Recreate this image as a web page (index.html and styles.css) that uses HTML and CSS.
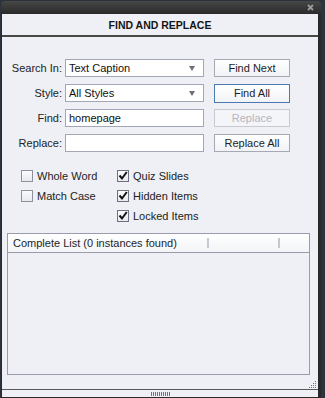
FILE: index.html
```html
<!DOCTYPE html>
<html lang="en">
<head>
    <meta charset="UTF-8">
    <meta name="viewport" content="width=device-width, initial-scale=1.0">
    <title>Find and Replace</title>
    <link rel="stylesheet" href="styles.css">
</head>
<body>
    <div class="window">
        <div class="titlebar">
            <svg class="close" width="7" height="7" viewBox="0 0 7 7">
                <path d="M1 1L6 6M6 1L1 6" stroke="#9a9a9a" stroke-width="1.8"/>
            </svg>
        </div>
        <div class="panel">
            <div class="header">FIND AND REPLACE</div>
            <div class="form">
                <label>Search In:</label>
                <div class="select">Text Caption<span class="arrow"></span></div>
                <button class="btn">Find Next</button>

                <label>Style:</label>
                <div class="select">All Styles<span class="arrow"></span></div>
                <button class="btn default">Find All</button>

                <label>Find:</label>
                <input type="text" value="homepage">
                <button class="btn" disabled>Replace</button>

                <label>Replace:</label>
                <input type="text" value="">
                <button class="btn">Replace All</button>
            </div>
            <div class="options">
                <div class="check"><span class="box"></span>Whole Word</div>
                <div class="check"><span class="box on"></span>Quiz Slides</div>
                <div class="check"><span class="box"></span>Match Case</div>
                <div class="check"><span class="box on"></span>Hidden Items</div>
                <div class="check"></div>
                <div class="check"><span class="box on"></span>Locked Items</div>
            </div>
            <div class="list">
                <div class="list-head">
                    <span class="col first">Complete List (0 instances found)</span>
                    <span class="sep"></span>
                    <span class="col second"></span>
                    <span class="sep"></span>
                    <span class="col"></span>
                </div>
                <div class="list-body"></div>
            </div>
            <div class="grip">
                <svg width="9" height="9" viewBox="0 0 9 9" fill="#6f7180">
                    <rect x="7" y="1" width="1" height="1"/>
                    <rect x="5" y="3" width="1" height="1"/><rect x="7" y="3" width="1" height="1"/>
                    <rect x="3" y="5" width="1" height="1"/><rect x="5" y="5" width="1" height="1"/><rect x="7" y="5" width="1" height="1"/>
                    <rect x="1" y="7" width="1" height="1"/><rect x="3" y="7" width="1" height="1"/><rect x="5" y="7" width="1" height="1"/><rect x="7" y="7" width="1" height="1"/>
                </svg>
            </div>
            <div class="footer"><span class="handle"></span></div>
        </div>
    </div>
</body>
</html>
```

FILE: styles.css
```css
body {
    margin: 0;
    background: #2c333c;
    font-family: "Liberation Sans", Arial, sans-serif;
    font-size: 11px;
    color: #1e1e1e;
    overflow: hidden;
}
.window {
    margin: 1px 0 0 1px;
    width: 320px;
    height: 397px;
    box-sizing: border-box;
    padding: 0 3px 1px 1px;
    display: flex;
    flex-direction: column;
    background: linear-gradient(#474747 0, #2a2a2a 13px, #2a2a2a 100%);
    border-radius: 4px 4px 0 0;
}
.titlebar {
    height: 13px;
    display: flex;
    justify-content: flex-end;
    align-items: center;
    padding-right: 4px;
}
.panel {
    flex: 1;
    display: flex;
    flex-direction: column;
    background: #eef0f5;
}
.header {
    height: 21px;
    line-height: 22px;
    text-align: center;
    font-weight: bold;
    font-size: 10.5px;
    color: #151515;
    border-bottom: 2px solid #484848;
}
.form {
    display: grid;
    grid-template-columns: 60px 139px 83px;
    grid-auto-rows: 18px;
    column-gap: 3px;
    row-gap: 7px;
    padding-top: 22px;
    align-items: center;
}
.form > :nth-child(3n) {
    margin-left: 7px;
}
label {
    text-align: right;
    color: #222;
}
.select, input {
    height: 18px;
    box-sizing: border-box;
    border: 1px solid #a3a6b7;
    background: #fff;
    font-family: inherit;
    font-size: 11px;
    color: #111;
    padding: 0 0 0 3px;
    margin: 0;
    display: flex;
    align-items: center;
    position: relative;
}
input {
    outline: none;
}
.arrow {
    position: absolute;
    right: 8px;
    top: 6px;
    border-left: 3.5px solid transparent;
    border-right: 3.5px solid transparent;
    border-top: 5px solid #6b6e7c;
}
.btn {
    height: 18px;
    box-sizing: border-box;
    border: 1px solid #a6a8b4;
    background: linear-gradient(#ffffff, #f2f3f6);
    font-family: inherit;
    font-size: 11px;
    color: #1e1e1e;
    padding: 0;
}
.btn.default {
    height: 19px;
    border-color: #4a78b0;
}
.btn:disabled {
    color: #b4b6c0;
    border-color: #c8cad2;
    background: #f4f5f8;
}
.options {
    display: grid;
    grid-template-columns: 96px 96px;
    grid-auto-rows: 12px;
    row-gap: 8px;
    padding: 18px 0 0 19px;
}
.check {
    display: flex;
    align-items: center;
    gap: 4px;
    color: #222;
    white-space: nowrap;
}
.box {
    width: 12px;
    height: 12px;
    box-sizing: border-box;
    border: 1px solid #8e909f;
    background: linear-gradient(#fafbfd, #e7e9ef);
    flex: none;
}
.box.on {
    border-color: #6d7080;
    background: url("data:image/svg+xml,%3Csvg xmlns='http://www.w3.org/2000/svg' width='10' height='10'%3E%3Cpath d='M1.5 4.5L4 7.5L8.8 1' fill='none' stroke='%23111' stroke-width='2'/%3E%3C/svg%3E") center no-repeat, linear-gradient(#fafbfd, #e7e9ef);
}
.list {
    margin: 11px 8px 0 5px;
    height: 142px;
    box-sizing: border-box;
    border: 1px solid #9a9cad;
    display: flex;
    flex-direction: column;
}
.list-head {
    height: 19px;
    box-sizing: border-box;
    border-bottom: 1px solid #9a9cad;
    background: linear-gradient(#ffffff, #f3f4f7);
    display: flex;
    align-items: center;
    color: #1e1e1e;
}
.col.first {
    width: 199px;
    padding-left: 5px;
    box-sizing: border-box;
}
.col.second {
    width: 69px;
}
.sep {
    width: 2px;
    height: 10px;
    background: #c8c9d0;
}
.list-body {
    flex: 1;
}
.grip {
    height: 14px;
    display: flex;
    justify-content: flex-end;
    align-items: flex-end;
    padding-right: 1px;
}
.footer {
    height: 7px;
    border-top: 1px solid #5a5a5a;
    display: flex;
    justify-content: center;
    align-items: center;
}
.handle {
    width: 19px;
    height: 4px;
    background: repeating-linear-gradient(90deg, #6f7180 0 1px, transparent 1px 2px);
}
```
